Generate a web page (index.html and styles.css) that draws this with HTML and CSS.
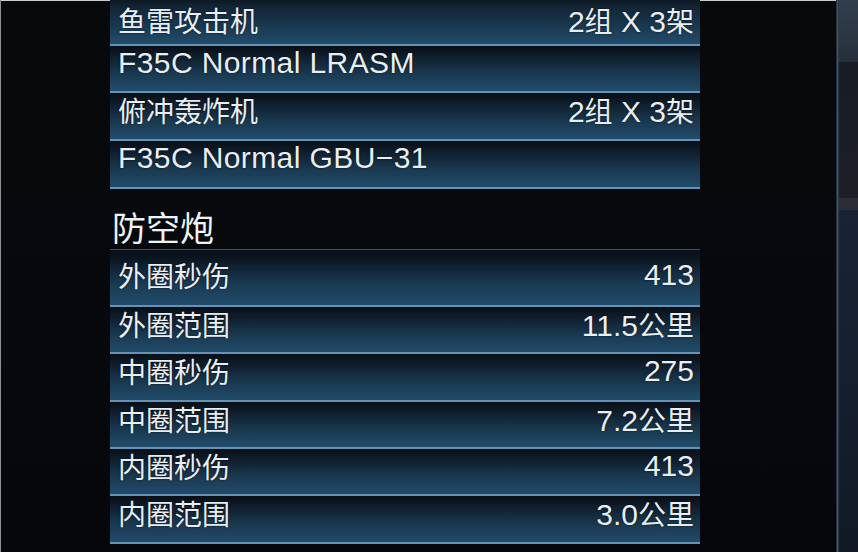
FILE: index.html
```html
<!DOCTYPE html>
<html lang="zh">
<head>
<meta charset="utf-8">
<link rel="stylesheet" href="styles.css">
</head>
<body>
<div class="screen">
  <div class="main">
    <div class="panel">
      <div class="table table-top">
        <div class="row first"><span class="k c">鱼雷攻击机</span><span class="v">2<span class="c">组</span> X 3<span class="c">架</span></span></div>
        <div class="row"><span class="k latin">F35C Normal LRASM</span></div>
        <div class="row"><span class="k c">俯冲轰炸机</span><span class="v">2<span class="c">组</span> X 3<span class="c">架</span></span></div>
        <div class="row"><span class="k latin">F35C Normal GBU−31</span></div>
      </div>
      <h2 class="heading">防空炮</h2>
      <div class="table table-aa">
        <div class="row first"><span class="k c">外圈秒伤</span><span class="v">413</span></div>
        <div class="row"><span class="k c">外圈范围</span><span class="v">11.5<span class="c">公里</span></span></div>
        <div class="row"><span class="k c">中圈秒伤</span><span class="v">275</span></div>
        <div class="row"><span class="k c">中圈范围</span><span class="v">7.2<span class="c">公里</span></span></div>
        <div class="row"><span class="k c">内圈秒伤</span><span class="v">413</span></div>
        <div class="row"><span class="k c">内圈范围</span><span class="v">3.0<span class="c">公里</span></span></div>
      </div>
    </div>
  </div>
  <div class="divider"></div>
  <div class="side">
    <div class="sky"></div>
    <div class="hill"></div>
    <div class="band"></div>
    <div class="sea"></div>
  </div>
</div>
</body>
</html>
```

FILE: styles.css
```css
html, body {
  margin: 0;
  padding: 0;
  background: #07090c;
}
body {
  width: 858px;
  height: 552px;
  overflow: hidden;
  font-family: "Liberation Sans", "Noto Sans CJK SC", sans-serif;
  color: #e8eef3;
}
.screen {
  display: flex;
  width: 858px;
  height: 552px;
  border-left: 1px solid #8d8f92;
  box-sizing: border-box;
}
.main {
  width: 835px;
  height: 552px;
  background: linear-gradient(180deg, #08090b 0%, #07090c 40%, #05070a 100%);
  box-shadow: inset 0 1px 0 #c9ccd0;
}
.panel {
  width: 590px;
  margin-left: 109px;
  display: flex;
  flex-direction: column;
}
.table {
  display: flex;
  flex-direction: column;
}
.row {
  height: 47.7px;
  box-sizing: border-box;
  display: flex;
  justify-content: space-between;
  align-items: flex-start;
  padding: 1px 6px 0 8px;
  background: linear-gradient(180deg, #080e15 0%, #0f1d2b 22%, #19384f 60%, #224c6b 100%);
  border-bottom: 2px solid #6394b8;
  font-size: 30px;
  line-height: 32px;
  text-shadow: 0 0 2px rgba(0,0,0,.7);
}
.table-top .row.first {
  height: 45.7px;
  padding-top: 5px;
  line-height: 30px;
  background: linear-gradient(180deg, #0d1923 0%, #142739 20%, #19384f 58%, #224c6b 100%);
}
.row .k, .row .v {
  white-space: nowrap;
}
.c {
  font-family: "Noto Sans CJK SC", sans-serif;
  font-size: 28px;
}
.latin {
  letter-spacing: 0.4px;
}
.heading {
  margin: 19px 0 0 2px;
  font-weight: normal;
  font-family: "Noto Sans CJK SC", sans-serif;
  font-size: 34px;
  line-height: 38px;
  height: 41px;
  color: #eef2f5;
}
.table-aa {
  border-top: 1px solid #2e5878;
}
.table-aa .row {
  height: 47.4px;
}
.table-aa .row.first {
  height: 57px;
  padding-top: 9px;
  background: linear-gradient(180deg, #091119 0%, #0a141e 14%, #102233 30%, #1a3c56 65%, #224c6b 100%);
}
.divider {
  width: 3px;
  height: 552px;
  background: linear-gradient(90deg, #18222d 0%, #405468 50%, #232f3c 100%);
}
.side {
  flex: 1;
  display: flex;
  flex-direction: column;
}
.sky {
  height: 62px;
  background: linear-gradient(180deg, #333e4c 0%, #26303c 100%);
}
.hill {
  height: 136px;
  background: linear-gradient(180deg, #191c23 0%, #1e1f26 100%);
}
.band {
  height: 12px;
  background: #2c2d36;
}
.sea {
  flex: 1;
  background: linear-gradient(180deg, #1a2333 0%, #161f2e 50%, #121925 100%);
}
```
